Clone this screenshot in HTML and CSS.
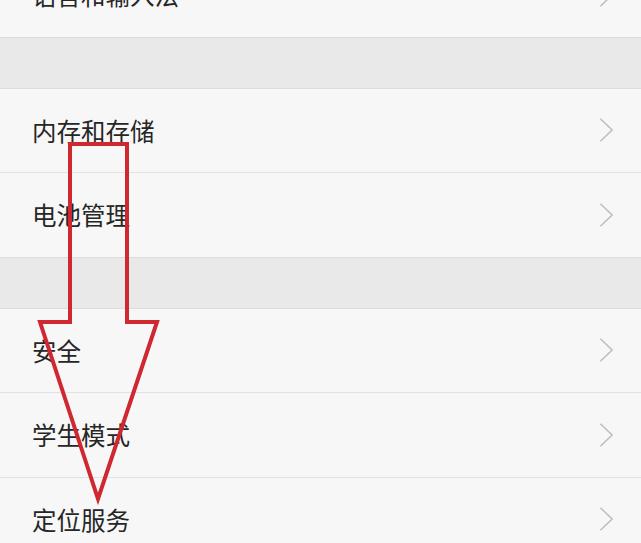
FILE: index.html
```html
<!DOCTYPE html>
<html lang="zh-CN">

<head>
  <meta charset='utf-8'>
  <title>设置</title>
  <link rel="stylesheet" href="styles.css">
</head>

<body>
  <div class='settings'>
    <div class='group first'>
      <div class='row'>
        <span class='label'>语言和输入法</span>
        <svg class='chevron' viewBox='0 0 16 26'><polyline points='1.5,1 14,13 1.5,25'/></svg>
      </div>
    </div>
    <div class='spacer'></div>
    <div class='group'>
      <div class='row'>
        <span class='label'>内存和存储</span>
        <svg class='chevron' viewBox='0 0 16 26'><polyline points='1.5,1 14,13 1.5,25'/></svg>
      </div>
      <div class='row'>
        <span class='label'>电池管理</span>
        <svg class='chevron' viewBox='0 0 16 26'><polyline points='1.5,1 14,13 1.5,25'/></svg>
      </div>
    </div>
    <div class='spacer'></div>
    <div class='group'>
      <div class='row'>
        <span class='label'>安全</span>
        <svg class='chevron' viewBox='0 0 16 26'><polyline points='1.5,1 14,13 1.5,25'/></svg>
      </div>
      <div class='row'>
        <span class='label'>学生模式</span>
        <svg class='chevron' viewBox='0 0 16 26'><polyline points='1.5,1 14,13 1.5,25'/></svg>
      </div>
      <div class='row'>
        <span class='label'>定位服务</span>
        <svg class='chevron' viewBox='0 0 16 26'><polyline points='1.5,1 14,13 1.5,25'/></svg>
      </div>
    </div>
  </div>

  <!-- 向下箭头标注 -->
  <svg class='arrow' width='641' height='543' viewBox='0 0 641 543'>
    <polygon points='70,144 127,144 127,322 157,322 98,499 40,322 70,322'/>
  </svg>
</body>

</html>
```

FILE: styles.css
```css
* {
  margin: 0;
  padding: 0;
}

html,
body {
  height: 100%;
  overflow: hidden;
}

body {
  background: #f7f7f7;
  font-family: "Noto Sans CJK SC", "Noto Sans", sans-serif;
  color: #262626;
  position: relative;
}

.settings {
  margin-top: -47px;
}

.group {
  border-top: 1px solid #dcdcdc;
  border-bottom: 1px solid #dcdcdc;
}

.group.first {
  border-top: none;
}

.row {
  height: 83.5px;
  display: flex;
  align-items: center;
  justify-content: space-between;
  padding: 0 27px 0 32px;
  border-bottom: 1px solid #e2e2e2;
}

.row:last-child {
  border-bottom: none;
}

.label {
  font-size: 24.5px;
}

.chevron {
  width: 15px;
  height: 26px;
}

.chevron polyline {
  fill: none;
  stroke: #bcbcbc;
  stroke-width: 1.6;
}

.spacer {
  height: 50px;
  background: #e9e9e9;
}

.arrow {
  position: absolute;
  top: 0;
  left: 0;
  pointer-events: none;
}

.arrow polygon {
  fill: none;
  stroke: #cf2830;
  stroke-width: 4;
  stroke-linejoin: miter;
}
```
